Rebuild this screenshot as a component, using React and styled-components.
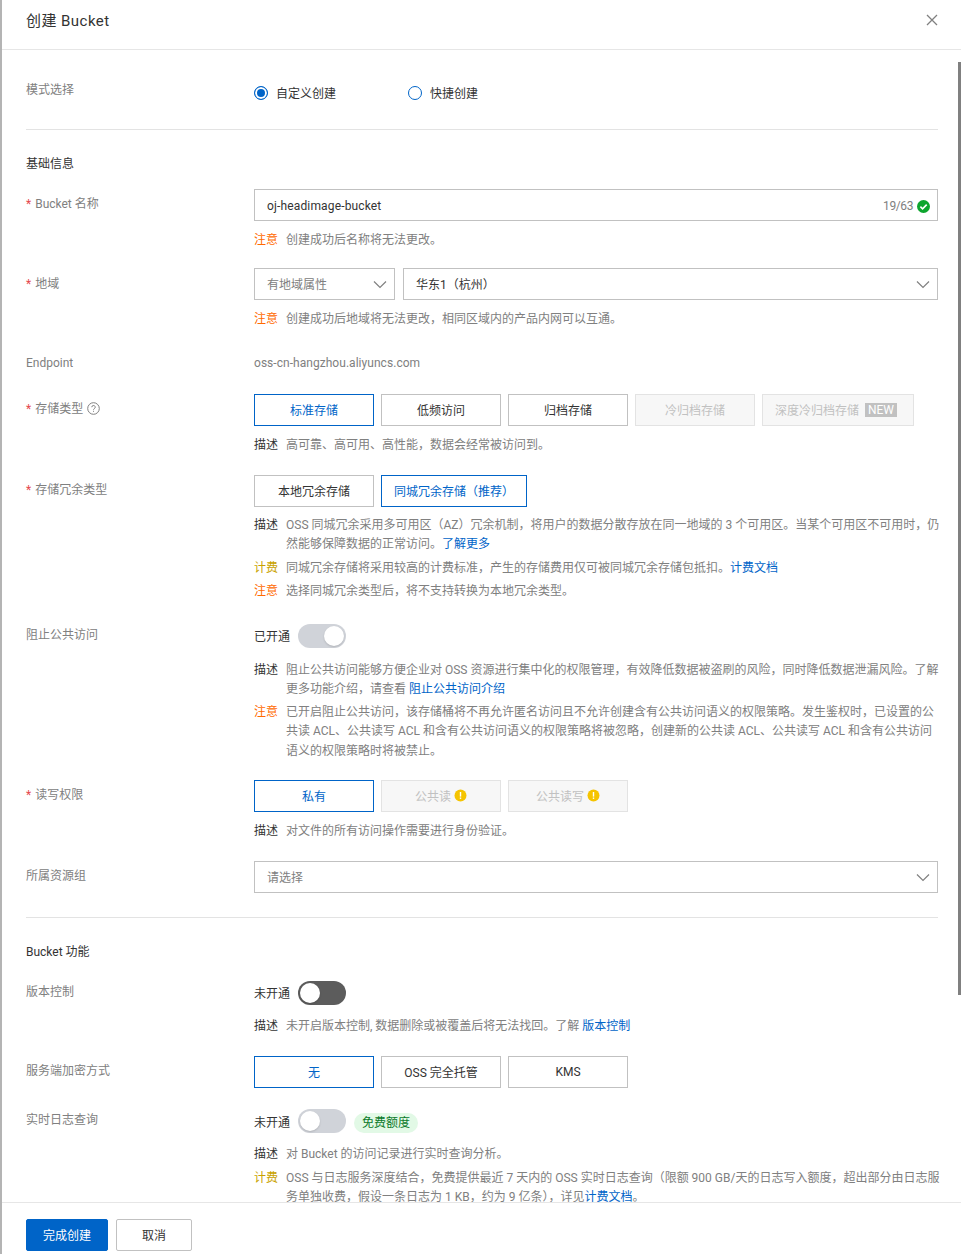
import React from 'react'
import styled, { createGlobalStyle } from 'styled-components'

const GlobalStyle = createGlobalStyle`
  html, body { margin: 0; padding: 0; background: #fff; }
  body {
    font-family: Roboto, "Noto Sans CJK SC", sans-serif;
    font-size: 12px;
    color: #333;
  }
  * { box-sizing: border-box; }
`

const Drawer = styled.div`
  position: relative;
  display: flex;
  flex-direction: column;
  width: 961px;
  height: 1254px;
  border-left: 2px solid #b4b4b4;
  background: #fff;
  overflow: hidden;
`

const Header = styled.div`
  display: flex;
  align-items: center;
  justify-content: space-between;
  flex: none;
  height: 50px;
  padding: 0 22px 8px 24px;
  border-bottom: 1px solid #e6e6e6;
`

const Title = styled.div`
  font-size: 15px;
  line-height: 22px;
  letter-spacing: 0.45px;
  color: #333;
`

const CloseBtn = styled.svg`
  width: 14px;
  height: 14px;
  margin-top: -2px;
  stroke: #808080;
  stroke-width: 1.3;
  fill: none;
`

const Body = styled.div`
  flex: 1;
  min-height: 0;
  overflow: hidden;
  padding: 0 23px 0 24px;
`

const ScrollThumb = styled.div`
  position: absolute;
  right: 0;
  top: 62px;
  width: 3px;
  height: 933px;
  background: #808080;
`

const Row = styled.div`
  display: flex;
  margin-top: ${p => p.$mt || 0}px;
`

const Label = styled.div`
  flex: none;
  width: 228px;
  padding-top: ${p => p.$pt ?? 6}px;
  line-height: 18px;
  color: #808080;
`

const Star = styled.span`
  color: #e5484d;
  margin-right: 4px;
`

const Control = styled.div`
  flex: 1;
  min-width: 0;
`

const Divider = styled.div`
  height: 1px;
  background: #e3e3e3;
  margin-top: ${p => p.$mt}px;
`

const Section = styled.div`
  margin-top: ${p => p.$mt}px;
  line-height: 18px;
  color: #333;
`

const RadioRow = styled.div`
  display: flex;
  gap: 72px;
  padding-top: 10px;
  height: 26px;
`

const Radio = styled.label`
  display: flex;
  align-items: center;
  color: #333;
  line-height: 18px;
`

const RadioDot = styled.span`
  width: 14px;
  height: 14px;
  margin-right: 8px;
  position: relative;
  top: -1px;
  border-radius: 50%;
  border: 1px solid #0064c8;
  background: ${p => (p.$on ? '#0064c8' : '#fff')};
  box-shadow: ${p => (p.$on ? 'inset 0 0 0 2px #fff' : 'none')};
`

const Field = styled.div`
  display: flex;
  align-items: center;
  justify-content: space-between;
  width: ${p => p.$w || 'auto'};
  flex: ${p => (p.$w ? 'none' : '1')};
  height: 32px;
  padding: 3px 12px 0;
  border: 1px solid #c1c1c1;
  color: ${p => (p.$muted ? '#808080' : '#333')};
  line-height: 24px;
`

const FieldRow = styled.div`
  display: flex;
  gap: 8px;
`

const LatinValue = styled.span`
  margin-top: -2px;
  letter-spacing: 0.15px;
`

const Counter = styled.span`
  display: flex;
  align-items: center;
  gap: 4px;
  margin: -1px -5px 0 0;
  letter-spacing: -0.4px;
  color: #808080;
`

const Chevron = styled.svg`
  width: 14px;
  height: 14px;
  margin: -3px -5px 0 0;
  stroke: #808080;
  stroke-width: 1.2;
  fill: none;
`

const Note = styled.div`
  display: flex;
  margin-top: ${p => p.$mt ?? 9}px;
  margin-right: -2px;
  line-height: 19.5px;
`

const NoteTag = styled.span`
  flex: none;
  width: 32px;
  color: ${p => p.$color};
`

const NoteText = styled.span`
  color: #808080;
`

const Plain = styled.div`
  color: #808080;
  line-height: 18px;
  letter-spacing: 0.04px;
`

const Link = styled.a`
  color: #0064c8;
`

const Options = styled.div`
  display: flex;
  gap: 7px;
`

const Option = styled.div`
  display: flex;
  align-items: center;
  justify-content: center;
  gap: 3px;
  width: ${p => p.$w || 120}px;
  height: 32px;
  padding-bottom: 1px;
  border: 1px solid ${p => (p.$active ? '#0064c8' : p.$disabled ? '#e3e3e3' : '#c1c1c1')};
  background: ${p => (p.$disabled ? '#f7f7f7' : '#fff')};
  color: ${p => (p.$active ? '#0064c8' : p.$disabled ? '#c1c1c1' : '#333')};
`

const NewTag = styled.span`
  margin: 0 4px 0 3px;
  padding: 0 3px;
  line-height: 14px;
  background: #c1c1c1;
  color: #fff;
`

const SwitchRow = styled.div`
  display: flex;
  align-items: center;
  height: 24px;
  color: #333;
`

const Switch = styled.span`
  position: relative;
  width: 48px;
  height: 24px;
  margin-left: 8px;
  border-radius: 12px;
  background: ${p => (p.$dark ? '#5c5c5c' : '#d0d3d9')};
  &::after {
    content: '';
    position: absolute;
    top: 2px;
    left: ${p => (p.$on ? '26px' : '2px')};
    width: 20px;
    height: 20px;
    border-radius: 50%;
    background: #fff;
    box-shadow: 0 1px 2px rgba(0, 0, 0, 0.15);
  }
`

const FreeTag = styled.span`
  margin-left: 8px;
  padding: 0 8px;
  position: relative;
  top: 2px;
  height: 20px;
  line-height: 20px;
  border-radius: 10px;
  background: #e2f9e6;
  color: #0a7a2a;
`

const Footer = styled.div`
  flex: none;
  display: flex;
  gap: 8px;
  height: 52px;
  padding: 16px 0 0 24px;
  border-top: 1px solid #e6e6e6;
`

const Button = styled.button`
  width: ${p => p.$w}px;
  height: 32px;
  padding: 0 0 1px;
  border: 1px solid ${p => (p.$primary ? '#0064c8' : '#c1c1c1')};
  border-radius: 2px;
  background: ${p => (p.$primary ? '#0064c8' : '#fff')};
  color: ${p => (p.$primary ? '#fff' : '#333')};
  font: inherit;
`

const Arrow = () => (
  <Chevron viewBox="0 0 14 14"><path d="M1 4.5 7 10.5l6-6" /></Chevron>
)

const Warn = () => (
  <svg width="13" height="13" viewBox="0 0 13 13">
    <circle cx="6.5" cy="6.5" r="6" fill="#f5c400" />
    <rect x="5.8" y="3" width="1.4" height="4.6" fill="#fff" />
    <rect x="5.8" y="8.5" width="1.4" height="1.4" fill="#fff" />
  </svg>
)

const Help = () => (
  <svg width="13" height="13" viewBox="0 0 13 13" style={{ marginLeft: 4, verticalAlign: -2 }}>
    <circle cx="6.5" cy="6.5" r="5.8" fill="none" stroke="#808080" />
    <path d="M4.8 5.2a1.7 1.7 0 1 1 2.5 1.5c-.5.3-.8.6-.8 1.1" fill="none" stroke="#808080" />
    <rect x="6" y="8.8" width="1" height="1" fill="#808080" />
  </svg>
)

const Check = () => (
  <svg width="13" height="13" viewBox="0 0 13 13">
    <circle cx="6.5" cy="6.5" r="6.5" fill="#0da52e" />
    <path d="M3.4 6.6 5.6 8.8 9.7 4.6" fill="none" stroke="#fff" strokeWidth="1.6" />
  </svg>
)

const ORANGE = '#ff6a00'
const GOLD = '#c9a200'
const DARK = '#333'

export default function App() {
  return (
    <>
      <GlobalStyle />
      <Drawer>
        <Header>
          <Title>创建 Bucket</Title>
          <CloseBtn viewBox="0 0 14 14"><path d="M2 2l10 10M12 2 2 12" /></CloseBtn>
        </Header>
        <Body>
          <Row $mt={26}>
            <Label $pt={5}>模式选择</Label>
            <RadioRow>
              <Radio><RadioDot $on />自定义创建</Radio>
              <Radio><RadioDot />快捷创建</Radio>
            </RadioRow>
          </Row>
          <Divider $mt={27} />
          <Section $mt={25}>基础信息</Section>

          <Row $mt={16}>
            <Label><Star>*</Star>Bucket 名称</Label>
            <Control>
              <Field>
                <LatinValue>oj-headimage-bucket</LatinValue>
                <Counter>19/63 <Check /></Counter>
              </Field>
              <Note $mt={10}><NoteTag $color={ORANGE}>注意</NoteTag><NoteText>创建成功后名称将无法更改。</NoteText></Note>
            </Control>
          </Row>

          <Row $mt={17}>
            <Label $pt={7}><Star>*</Star>地域</Label>
            <Control>
              <FieldRow>
                <Field $w="141px" $muted>有地域属性<Arrow /></Field>
                <Field>华东1（杭州）<Arrow /></Field>
              </FieldRow>
              <Note $mt={10}><NoteTag $color={ORANGE}>注意</NoteTag><NoteText>创建成功后地域将无法更改，相同区域内的产品内网可以互通。</NoteText></Note>
            </Control>
          </Row>

          <Row $mt={25}>
            <Label $pt={0}>Endpoint</Label>
            <Control><Plain>oss-cn-hangzhou.aliyuncs.com</Plain></Control>
          </Row>

          <Row $mt={22}>
            <Label><Star>*</Star>存储类型<Help /></Label>
            <Control>
              <Options>
                <Option $active>标准存储</Option>
                <Option>低频访问</Option>
                <Option>归档存储</Option>
                <Option $disabled>冷归档存储</Option>
                <Option $disabled $w={152}>深度冷归档存储<NewTag>NEW</NewTag></Option>
              </Options>
              <Note $mt={10}><NoteTag $color={DARK}>描述</NoteTag><NoteText>高可靠、高可用、高性能，数据会经常被访问到。</NoteText></Note>
            </Control>
          </Row>

          <Row $mt={19}>
            <Label><Star>*</Star>存储冗余类型</Label>
            <Control>
              <Options>
                <Option>本地冗余存储</Option>
                <Option $active $w={146}>同城冗余存储（推荐）</Option>
              </Options>
              <Note $mt={9}>
                <NoteTag $color={DARK}>描述</NoteTag>
                <NoteText>OSS 同城冗余采用多可用区（AZ）冗余机制，将用户的数据分散存放在同一地域的 3 个可用区。当某个可用区不可用时，仍然能够保障数据的正常访问。<Link>了解更多</Link></NoteText>
              </Note>
              <Note $mt={4}>
                <NoteTag $color={GOLD}>计费</NoteTag>
                <NoteText>同城冗余存储将采用较高的计费标准，产生的存储费用仅可被同城冗余存储包抵扣。<Link>计费文档</Link></NoteText>
              </Note>
              <Note $mt={4}>
                <NoteTag $color={ORANGE}>注意</NoteTag>
                <NoteText>选择同城冗余类型后，将不支持转换为本地冗余类型。</NoteText>
              </Note>
            </Control>
          </Row>

          <Row $mt={22}>
            <Label $pt={2}>阻止公共访问</Label>
            <Control>
              <SwitchRow>已开通<Switch $on /></SwitchRow>
              <Note $mt={13}>
                <NoteTag $color={DARK}>描述</NoteTag>
                <NoteText>阻止公共访问能够方便企业对 OSS 资源进行集中化的权限管理，有效降低数据被盗刷的风险，同时降低数据泄漏风险。了解更多功能介绍，请查看 <Link>阻止公共访问介绍</Link></NoteText>
              </Note>
              <Note $mt={3}>
                <NoteTag $color={ORANGE}>注意</NoteTag>
                <NoteText>已开启阻止公共访问，该存储桶将不再允许匿名访问且不允许创建含有公共访问语义的权限策略。发生鉴权时，已设置的公共读 ACL、公共读写 ACL 和含有公共访问语义的权限策略将被忽略，创建新的公共读 ACL、公共读写 ACL 和含有公共访问语义的权限策略时将被禁止。</NoteText>
              </Note>
            </Control>
          </Row>

          <Row $mt={19}>
            <Label><Star>*</Star>读写权限</Label>
            <Control>
              <Options>
                <Option $active>私有</Option>
                <Option $disabled>公共读 <Warn /></Option>
                <Option $disabled>公共读写 <Warn /></Option>
              </Options>
              <Note $mt={10}><NoteTag $color={DARK}>描述</NoteTag><NoteText>对文件的所有访问操作需要进行身份验证。</NoteText></Note>
            </Control>
          </Row>

          <Row $mt={19}>
            <Label>所属资源组</Label>
            <Control><Field $muted>请选择<Arrow /></Field></Control>
          </Row>

          <Divider $mt={24} />
          <Section $mt={25}>Bucket 功能</Section>

          <Row $mt={20}>
            <Label $pt={2}>版本控制</Label>
            <Control>
              <SwitchRow>未开通<Switch $dark /></SwitchRow>
              <Note $mt={12}>
                <NoteTag $color={DARK}>描述</NoteTag>
                <NoteText>未开启版本控制, 数据删除或被覆盖后将无法找回。了解 <Link>版本控制</Link></NoteText>
              </Note>
            </Control>
          </Row>

          <Row $mt={20}>
            <Label>服务端加密方式</Label>
            <Options>
              <Option $active>无</Option>
              <Option>OSS 完全托管</Option>
              <Option>KMS</Option>
            </Options>
          </Row>

          <Row $mt={21}>
            <Label $pt={2}>实时日志查询</Label>
            <Control>
              <SwitchRow>未开通<Switch /><FreeTag>免费额度</FreeTag></SwitchRow>
              <Note $mt={12}>
                <NoteTag $color={DARK}>描述</NoteTag>
                <NoteText>对 Bucket 的访问记录进行实时查询分析。</NoteText>
              </Note>
              <Note $mt={4}>
                <NoteTag $color={GOLD}>计费</NoteTag>
                <NoteText>OSS 与日志服务深度结合，免费提供最近 7 天内的 OSS 实时日志查询（限额 900 GB/天的日志写入额度，超出部分由日志服务单独收费，假设一条日志为 1 KB，约为 9 亿条），详见<Link>计费文档</Link>。</NoteText>
              </Note>
            </Control>
          </Row>
        </Body>
        <ScrollThumb />
        <Footer>
          <Button $primary $w={82}>完成创建</Button>
          <Button $w={76}>取消</Button>
        </Footer>
      </Drawer>
    </>
  )
}
